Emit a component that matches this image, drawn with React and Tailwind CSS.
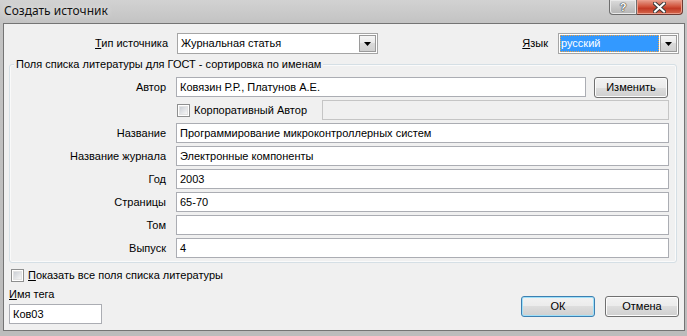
import React from "react";

function Check() {
  return (
    <div className="w-[13px] h-[13px] border border-[#8e8f8f] bg-white p-[1px] shrink-0">
      <div className="w-full h-full bg-[linear-gradient(135deg,#cbcfd5_0%,#f6f6f6_100%)] border border-[#e2e2e2]" />
    </div>
  );
}

function Arrow() {
  return (
    <div className="w-[17px] h-[17px] border border-[#9a9a9a] bg-[linear-gradient(to_bottom,#f6f6f6_0%,#e8e8e8_50%,#dadada_50%,#d0d0d0_100%)] flex items-center justify-center shrink-0">
      <svg width="7" height="4" viewBox="0 0 7 4"><path d="M0 0H7L3.5 4Z" fill="#000" /></svg>
    </div>
  );
}

function Btn({ children, primary }) {
  return (
    <div
      className={
        primary
          ? "w-[74px] h-[21px] rounded-[3px] border border-[#3c7fb1] shadow-[inset_0_0_0_1px_#9fe0f9] bg-[linear-gradient(to_bottom,#f2f2f2_0%,#ebebeb_50%,#dddddd_50%,#cfcfcf_100%)] flex items-center justify-center"
          : "w-[74px] h-[21px] rounded-[3px] border border-[#707070] shadow-[inset_0_0_0_1px_#fcfcfc] bg-[linear-gradient(to_bottom,#f2f2f2_0%,#ebebeb_50%,#dddddd_50%,#cfcfcf_100%)] flex items-center justify-center"
      }
    >
      {children}
    </div>
  );
}

function Row({ label, children }) {
  return (
    <div className="flex items-center h-[20px]">
      <div className="w-[157px] text-right pr-[1px]">{label}</div>
      <div className="ml-[9px] flex items-center">{children}</div>
    </div>
  );
}

function Field({ value }) {
  return (
    <div className="w-[493px] h-[20px] border border-[#abadb3] bg-white flex items-center pl-[3px]">
      {value}
    </div>
  );
}

export default function App() {
  return (
    <div className="w-[687px] h-[336px] bg-[linear-gradient(to_bottom,#d2d2d2_0px,#c3c3c3_23px,#bcbcbc_100%)] font-['Liberation_Sans',Arial,sans-serif] text-[11px] text-black flex flex-col overflow-hidden">
      {/* title bar */}
      <div className="h-[23px] relative flex items-start">
        <div className="pl-[4px] pt-[3px] text-[12px] text-[#111] [text-shadow:0_0_6px_#f4f4f4] font-['Noto_Sans',sans-serif] leading-[15px]">Создать источник</div>
        <div className="absolute top-0 left-[609px] flex">
          <div className="w-[28px] h-[15px] rounded-bl-[4px] border border-t-0 border-[#6e6e6e] bg-[linear-gradient(to_bottom,#dcdcdc_0%,#c7c7c7_50%,#b4b4b4_100%)] shadow-[inset_0_0_0_1px_#e9e9e9] flex items-center justify-center">
            <span className="text-[11px] font-bold text-white leading-[11px] [text-shadow:0_0_1px_#333,0_0_1px_#333,0_0_1px_#333]">?</span>
          </div>
          <div className="w-[46px] h-[15px] rounded-br-[4px] border border-l-0 border-t-0 border-[#6e3a33] bg-[linear-gradient(to_bottom,#e7a08f_0%,#d2553e_45%,#c23a25_60%,#d5694f_100%)] shadow-[inset_0_0_0_1px_#eb9c8a] flex items-center justify-center">
            <svg width="13" height="11" viewBox="0 0 13 11">
              <path d="M2 1.5L11 9.5M11 1.5L2 9.5" stroke="#3a3a3a" strokeWidth="4" strokeLinecap="square" />
              <path d="M2 1.5L11 9.5M11 1.5L2 9.5" stroke="#fff" strokeWidth="2" strokeLinecap="square" />
            </svg>
          </div>
        </div>
      </div>

      {/* client */}
      <div className="ml-[3px] w-[682px] h-[308px] border border-[#747474] bg-[#f0f0f0] flex flex-col">
        {/* top row */}
        <div className="flex items-center h-[21px] mt-[9px]">
          <div className="w-[164px] text-right">
            <span className="underline">Т</span>ип источника
          </div>
          <div className="ml-[9px] w-[201px] h-[21px] border border-[#a5a5a5] bg-white flex items-center justify-between pl-[3px] pr-[1px]">
            <span>Журнальная статья</span>
            <Arrow />
          </div>
          <div className="flex-1 text-right">
            <span className="underline">Я</span>зык
          </div>
          <div className="ml-[10px] mr-[5px] w-[121px] h-[21px] border border-[#a5a5a5] bg-white flex items-center pl-[1px] pr-[1px]">
            <div className="flex-1 h-[17px] bg-[#3399ff] outline outline-1 outline-dotted outline-[#f0a040] -outline-offset-1 text-white flex items-center pl-[1px] mr-[1px]">
              русский
            </div>
            <Arrow />
          </div>
        </div>

        {/* group box */}
        <div className="relative ml-[5px] mt-[10px] w-[668px] h-[199px] border border-[#d5dfe5] rounded-[3px] shadow-[inset_0_0_0_1px_#fafafa] flex flex-col gap-[3px] pt-[12px]">
          <div className="absolute -top-[7px] left-[4px] px-[2px] bg-[#f0f0f0] leading-[13px]">
            Поля списка литературы для ГОСТ - сортировка по именам
          </div>
          <Row label="Автор">
            <div className="w-[410px] h-[20px] border border-[#abadb3] bg-white flex items-center pl-[3px]">
              Ковязин Р.Р., Платунов А.Е.
            </div>
            <div className="ml-[8px]">
              <Btn>Изменить</Btn>
            </div>
          </Row>
          <Row label="">
            <div className="w-[146px] flex items-center">
              <div className="ml-[1px]"><Check /></div>
              <span className="ml-[4px]">Корпоративный Автор</span>
            </div>
            <div className="w-[347px] h-[20px] border border-[#c5c5c5] bg-[#f0f0f0]" />
          </Row>
          <Row label="Название"><Field value="Программирование микроконтроллерных систем" /></Row>
          <Row label="Название журнала"><Field value="Электронные компоненты" /></Row>
          <Row label="Год"><Field value="2003" /></Row>
          <Row label="Страницы"><Field value="65-70" /></Row>
          <Row label="Том"><Field value="" /></Row>
          <Row label="Выпуск"><Field value="4" /></Row>
        </div>

        {/* bottom */}
        <div className="flex items-end justify-between pl-[5px] pr-[5px] mt-[5px]">
          <div className="flex flex-col">
            <div className="flex items-center h-[14px] ml-[2px]">
              <Check />
              <span className="ml-[4px]"><span className="underline">П</span>оказать все поля списка литературы</span>
            </div>
            <div className="mt-[6px] leading-[13px]"><span className="underline">И</span>мя тега</div>
            <div className="mt-[3px] w-[93px] h-[20px] border border-[#abadb3] bg-white flex items-center pl-[3px]">Ков03</div>
          </div>
          <div className="flex gap-[10px] mb-[7px]">
            <Btn primary>ОК</Btn>
            <Btn>Отмена</Btn>
          </div>
        </div>
      </div>
    </div>
  );
}
